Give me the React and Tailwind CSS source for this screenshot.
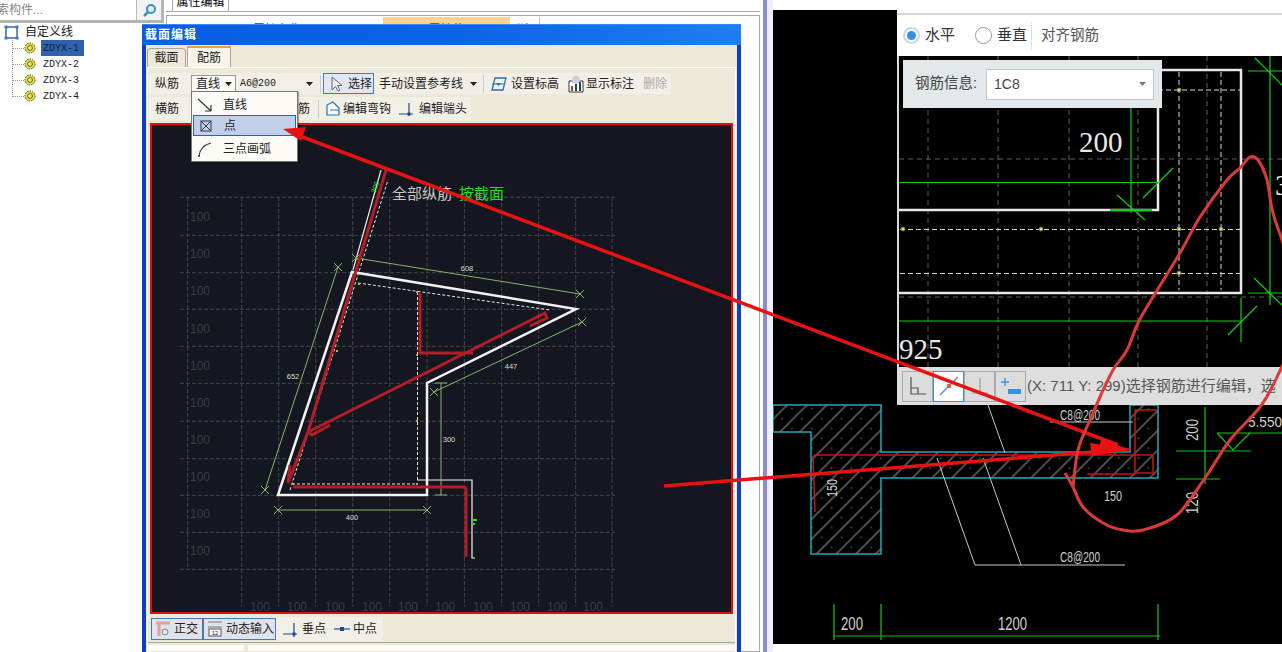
const gridX = [187.7, 241.7, 278.7, 315.7, 352.7, 389.7, 427, 464.4, 501.7, 538.7, 575.7, 612];
const gridY = [197.3, 235.3, 272.7, 309.3, 346.3, 383.3, 421.3, 458.7, 495.3, 532.3, 569.3];
const leftLabels = [217, 254, 291, 329, 366, 403, 440, 477, 514, 551];
const bottomLabels = [260, 297, 335, 372, 408, 445, 483, 520, 557, 593];
const treeItems = ["ZDYX-1", "ZDYX-2", "ZDYX-3", "ZDYX-4"];
const loopPoints = [[1065, 473], [1073, 487], [1083, 507], [1103, 523], [1123, 530], [1143, 530], [1177, 515], [1207, 475], [1230, 440], [1260, 407], [1277, 377], [1290, 340], [1290, 270], [1273, 213], [1267, 180], [1258, 160], [1250, 157], [1240, 168], [1227, 180], [1200, 217], [1180, 253], [1153, 297], [1138, 323], [1127, 350], [1113, 370], [1100, 397], [1090, 420], [1078, 450], [1073, 487]];

function smoothPath(pts) {
  let d = `M${pts[0][0]} ${pts[0][1]}`;
  for (let i = 0; i < pts.length - 1; i++) {
    const p0 = pts[Math.max(i - 1, 0)];
    const p1 = pts[i];
    const p2 = pts[i + 1];
    const p3 = pts[Math.min(i + 2, pts.length - 1)];
    const c1x = p1[0] + (p2[0] - p0[0]) / 6;
    const c1y = p1[1] + (p2[1] - p0[1]) / 6;
    const c2x = p2[0] - (p3[0] - p1[0]) / 6;
    const c2y = p2[1] - (p3[1] - p1[1]) / 6;
    d += `C${c1x} ${c1y} ${c2x} ${c2y} ${p2[0]} ${p2[1]}`;
  }
  return d;
}

function Gear() {
  return (
    <svg width="12" height="12" viewBox="0 0 12 12" className="shrink-0">
      <circle cx="6" cy="6" r="5" fill="#e8dc20" stroke="#555" strokeWidth="1" strokeDasharray="1.5 1" />
      <circle cx="6" cy="6" r="2.4" fill="#f4ee60" stroke="#444" strokeWidth="0.8" />
    </svg>
  );
}

function Arrow() {
  return (
    <svg width="7" height="4" viewBox="0 0 7 4" className="shrink-0">
      <path d="M0 0H7L3.5 4Z" fill="#222" />
    </svg>
  );
}

function Sep() {
  return <span className="block w-px h-[18px] bg-[#cfccbd] shrink-0" />;
}

function Tick({ x, y, s = 6 }) {
  return <path d={`M${x - s} ${y + s}L${x + s} ${y - s}M${x - s} ${y - s}L${x + s} ${y + s}`} />;
}

function SectionCanvas() {
  return (
    <svg viewBox="152 125 579 487" className="block w-full h-full" style={{ background: "#14171f" }}>
      <g stroke="#43464a" strokeWidth="1" strokeDasharray="4 2">
        {gridY.map((y) => <line key={y} x1="180" x2="615" y1={y} y2={y} />)}
        {gridX.map((x, i) => <line key={x} x1={x} x2={x} y1="197" y2={i === 0 ? 570 : 606} />)}
      </g>
      <g fill="#3a3d42" fontSize="12" fontFamily="Liberation Sans, sans-serif">
        {leftLabels.map((y) => <text key={y} x="190" y={y + 4}>100</text>)}
        {bottomLabels.map((x) => <text key={x} x={x} y="611" textAnchor="middle">100</text>)}
      </g>
      <text x="392" y="199" fontSize="15" fill="#c8c8c8" fontFamily="Noto Sans CJK SC, sans-serif">全部纵筋</text>
      <text x="459" y="199" fontSize="15" fill="#22e020" fontFamily="Noto Sans CJK SC, sans-serif">按截面</text>

      <g stroke="#e8e8e8" strokeWidth="1" strokeDasharray="3 2" fill="none">
        <path d="M358 283L550 310M417.5 292V480M292 484H417M290 490L388 180" />
      </g>
      <g stroke="#f2f2f2" fill="none">
        <path d="M278 495L352 272L576 309L427 383V495Z" strokeWidth="2.5" />
        <path d="M353 270L381 170M417 480H472V558H475" strokeWidth="1.2" />
      </g>
      <g stroke="#86b46c" strokeWidth="1" fill="none">
        <path d="M278 510H427M265 490L338 267M356 258L580 294M434 392L582 322M441 383V495" />
        <Tick x={278} y={510} s={4} />
        <Tick x={427} y={510} s={4} />
        <Tick x={265} y={490} s={4} />
        <Tick x={338} y={267} s={4} />
        <Tick x={356} y={258} s={4} />
        <Tick x={580} y={294} s={4} />
        <Tick x={434} y={392} s={4} />
        <Tick x={582} y={322} s={4} />
        <path d="M435 383H447M435 495H447" />
      </g>
      <g fill="#dddddd" fontSize="7.5" textAnchor="middle" fontFamily="Liberation Sans, sans-serif">
        <text x="352" y="520">400</text>
        <text x="293" y="379">652</text>
        <text x="467" y="271">608</text>
        <text x="511" y="369">447</text>
        <text x="449" y="442">300</text>
      </g>
      <g stroke="#b31c28" strokeWidth="3" fill="none">
        <path d="M386 170L308 432L288 483L290 465" />
        <path d="M293 487H463Q466 487 466 490V557" />
        <path d="M420 293V353H473" />
        <path d="M308 432L545 313L547 318L530 326" />
        <path d="M308 432L312 435L330 425" />
      </g>
      <g fill="#22e020" fontSize="7" fontFamily="Liberation Sans, sans-serif">
        <text x="371" y="191" transform="rotate(-70 375 189)">300</text>
        <rect x="472" y="519" width="5" height="2" />
        <rect x="472" y="523" width="3" height="2" />
      </g>
      <g fill="#d8a040">
        {[[359, 284], [417, 292], [417, 355], [337, 351], [417, 421], [293, 484], [417, 484]].map(([x, y]) => (
          <rect key={`${x}-${y}`} x={x - 1} y={y - 1} width="2" height="2" />
        ))}
      </g>
    </svg>
  );
}

function CadDrawing() {
  return (
    <svg viewBox="773 10 509 634" className="block w-full h-full" style={{ background: "#000" }}>
      <defs>
        <pattern id="hatch" width="14" height="14" patternUnits="userSpaceOnUse" patternTransform="rotate(-45)">
          <rect width="14" height="14" fill="#000" />
          <line x1="0" x2="14" y1="3" y2="3" stroke="#9a9a9a" strokeWidth="1" />
          <circle cx="5" cy="9" r="0.7" fill="#8a8a8a" />
        </pattern>
      </defs>
      <path d="M898 10V367" stroke="#d8d8d8" strokeWidth="2" />
      <g stroke="#5e5e5e" strokeWidth="1" strokeDasharray="5 4">
        {[928, 998, 1069, 1138, 1207].map((x) => <line key={x} x1={x} x2={x} y1="56" y2="367" />)}
        {[159, 297].map((y) => <line key={y} x1="899" x2="1282" y1={y} y2={y} />)}
      </g>
      <g stroke="#d8d8d8" strokeWidth="1" strokeDasharray="5 3">
        <path d="M1158 90H1240M900 229.5H1240M900 273.5H1240M1179 72V290M1221 72V290" />
      </g>
      <g stroke="#e8e8e8" strokeWidth="2.5" fill="none">
        <path d="M1158 70H1241V293H899M1158 108V210H899" />
      </g>
      <g stroke="#10d010" strokeWidth="1.2" fill="none">
        <path d="M899 182.5H1160M1131 108V213M1143 198L1173 168M1117 195L1145 220" />
        <path d="M1270 56V305M1248 71H1282M1255 58L1282 85M1248 293H1282M1254 278L1282 305" />
        <path d="M899 321H1241M1241 298V342M1228 335L1257 306" />
        <path d="M1110 210H1152" strokeWidth="2" />
      </g>
      <g fill="#d8d8a0" stroke="#7a7a20" strokeWidth="1">
        {[[903, 229], [1041, 229], [1179, 229], [1221, 229], [1179, 273], [1179, 90]].map(([x, y]) => (
          <circle key={`${x}-${y}`} cx={x} cy={y} r="2" />
        ))}
      </g>
      <g fill="#e8e8e8" fontFamily="Liberation Serif, serif" fontSize="29">
        <text x="1079" y="152">200</text>
        <text x="899" y="359">925</text>
        <text x="1275" y="195">3</text>
      </g>

      <path d="M773 405H881V452H1130V405H1158V478H881V554H811V432H773Z" fill="url(#hatch)" stroke="#20a8b4" strokeWidth="1.5" />
      <g stroke="#c81414" strokeWidth="1.5" fill="none">
        <path d="M815 512L813 458Q813 455 816 455H1150Q1153 455 1153 458V473H1135V410H1158M1087 474H1135" />
      </g>
      <g stroke="#c8c8c8" strokeWidth="1" fill="none">
        <path d="M937 458L975 565H1125M983 458L1021 565M988 405L1005 453M1050 422H1133" />
      </g>
      <g fill="#d0d0d0" fontFamily="Liberation Sans, sans-serif" fontSize="15">
        <text x="1060" y="562" textLength="40" lengthAdjust="spacingAndGlyphs">C8@200</text>
        <text x="1060" y="420" textLength="40" lengthAdjust="spacingAndGlyphs">C8@200</text>
        <text x="1104" y="501" textLength="18" lengthAdjust="spacingAndGlyphs">150</text>
        <text x="1248" y="427" textLength="34" lengthAdjust="spacingAndGlyphs">5.550</text>
        <text x="841" y="630" textLength="22" lengthAdjust="spacingAndGlyphs" fontSize="18">200</text>
        <text x="998" y="630" textLength="29" lengthAdjust="spacingAndGlyphs" fontSize="18">1200</text>
        <text transform="translate(837 497) rotate(-90)" textLength="18" lengthAdjust="spacingAndGlyphs">150</text>
        <text transform="translate(1198 441) rotate(-90)" textLength="22" lengthAdjust="spacingAndGlyphs" fontSize="17">200</text>
        <text transform="translate(1198 514) rotate(-90)" textLength="22" lengthAdjust="spacingAndGlyphs" fontSize="17">120</text>
      </g>
      <g stroke="#10c810" strokeWidth="1.2" fill="none">
        <path d="M1176 451H1251M1176 479H1220M1205 407V484M1217 433L1233 450L1250 433H1217M1250 433H1282" />
        <path d="M834 636H1160M834 604V640M881 604V640M1158 604V640" />
      </g>
    </svg>
  );
}

function MainOverlay() {
  return (
    <svg viewBox="0 0 1282 652" className="absolute inset-0 w-[1282px] h-[652px] pointer-events-none">
      <g stroke="#e81212" strokeWidth="3.5" fill="none">
        <path d="M292 133L1118 445" />
        <path d="M664 486L1105 451" />
      </g>
      <path d="M283 129L306 127L301 141Z" fill="#e81212" />
      <path d="M1132 450L1101 440L1097 455Z" fill="#e81212" />
      <path d="M1132 449L1090 443L1092 456Z" fill="#e81212" />
      <path d={smoothPath(loopPoints)} fill="none" stroke="#dc3a3a" strokeWidth="3" strokeLinejoin="round" />
    </svg>
  );
}

function ToolIcon({ children }) {
  return (
    <svg width="18" height="18" viewBox="0 0 18 18" className="shrink-0">
      {children}
    </svg>
  );
}

function Dialog() {
  return (
    <div className="absolute left-[142px] top-[24px] w-[599px] h-[628px] flex flex-col bg-[#0f3fc0] text-[12px] text-[#222]">
      <div className="h-[21px] shrink-0 flex items-center pl-[3px] font-bold text-white tracking-[1px] bg-gradient-to-r from-[#0b5ee0] via-[#0a62e6] to-[#1f7df0] border-t border-[#3c8af0]">
        截面编辑
      </div>
      <div className="flex-1 mx-[4px] mb-0 bg-[#ece9d8] flex flex-col relative min-h-0">
        <div className="h-[22px] shrink-0 flex items-end pl-[1px] gap-[1px]">
          <div className="w-[39px] h-[19px] flex items-center justify-center border border-b-0 border-[#aca899] bg-[#ece9d8] rounded-t-sm">截面</div>
          <div className="w-[44px] h-[21px] flex items-center justify-center border-x border-[#aca899] border-t-2 border-t-[#e8a838] bg-[#f7f5ea]">配筋</div>
        </div>
        <div className="flex-1 min-h-0 mx-[1px] border-t border-x border-white flex flex-col">
          <div className="h-[21px] mt-[5px] shrink-0 w-[523px] flex items-center bg-[#f2f0e6]">
            <span className="ml-[7px] w-[24px]">纵筋</span>
            <div className="ml-[12px] w-[45px] h-[17px] flex items-center justify-between pl-[4px] pr-[3px] bg-[#fbfaf5] border border-[#999]">
              直线<Arrow />
            </div>
            <div className="ml-[4px] w-[76px] flex items-center justify-between pr-[3px]">
              <span className="font-['Liberation_Mono',monospace] text-[10px]">A6@200</span>
              <Arrow />
            </div>
            <span className="ml-[4px]"><Sep /></span>
            <div className="ml-[2px] w-[51px] h-[21px] flex items-center pl-[3px] gap-[3px] bg-[#e2e6ef] border border-[#4a78b0]">
              <ToolIcon><path d="M5 2V15L8.5 11.5L11 16L13 15L10.5 10.5H15Z" fill="#eee" stroke="#667" strokeWidth="1" /></ToolIcon>
              <span>选择</span>
            </div>
            <span className="ml-[5px] w-[84px] shrink-0">手动设置参考线</span>
            <span className="ml-[7px]"><Arrow /></span>
            <span className="ml-[6px]"><Sep /></span>
            <span className="ml-[6px]">
              <ToolIcon><path d="M5 3H16L13 15H2Z" fill="none" stroke="#2a6fa8" strokeWidth="1.3" /><path d="M2 9H15" stroke="#2a6fa8" /><path d="M6 8H11L8.5 11Z" fill="#2a6fa8" /></ToolIcon>
            </span>
            <span className="ml-[3px] w-[48px] shrink-0">设置标高</span>
            <span className="ml-[8px]">
              <ToolIcon><path d="M2 6H16V17H2Z" fill="#fff" stroke="#333" /><circle cx="9" cy="5" r="4" fill="#ccd" /><path d="M5 11V16" stroke="#b33" strokeWidth="2" /><path d="M9 9V16M13 7V16" stroke="#245" strokeWidth="2" /></ToolIcon>
            </span>
            <span className="ml-[1px] w-[48px] shrink-0">显示标注</span>
            <span className="ml-[9px] text-[#aaa]">删除</span>
          </div>
          <div className="h-[23px] mt-[3px] shrink-0 w-[323px] flex items-center bg-[#f2f0e6]">
            <span className="ml-[7px] w-[24px]">横筋</span>
            <span className="ml-[119px]">筋</span>
            <span className="ml-[8px]"><Sep /></span>
            <span className="ml-[5px]">
              <ToolIcon><path d="M3 5L9 2L15 8V15H3Z" fill="#fff" stroke="#2a6fa8" strokeWidth="1.2" /><path d="M6 10H15" stroke="#2a6fa8" /></ToolIcon>
            </span>
            <span className="ml-[1px] w-[48px] shrink-0">编辑弯钩</span>
            <span className="ml-[7px]">
              <ToolIcon><path d="M1 14H15M11 3V16" stroke="#1c4a88" strokeWidth="1.2" /><rect x="9.5" y="12.5" width="3" height="3" fill="#1c4a88" /></ToolIcon>
            </span>
            <span className="ml-[3px] w-[48px] shrink-0">编辑端头</span>
          </div>
          <div className="mx-[2px] mt-[3px] border-2 border-[#e01010] w-[583px] h-[491px] shrink-0">
            <SectionCanvas />
          </div>
          <div className="h-[25px] mt-[2px] shrink-0 flex items-center pl-[3px]">
            <div className="w-[52px] h-[22px] flex items-center gap-[2px] pl-[2px] bg-[#dfe3ec] border border-[#4a78b0]">
              <ToolIcon><path d="M2 3H16M5 3V16" stroke="#e0a0a0" strokeWidth="3" /><circle cx="11" cy="12" r="3" fill="none" stroke="#789" /></ToolIcon>
              <span>正交</span>
            </div>
            <div className="w-[73px] h-[22px] flex items-center gap-[2px] pl-[2px] bg-[#dfe3ec] border border-[#4a78b0]">
              <ToolIcon><path d="M2 2H16M2 7H16" stroke="#777" /><rect x="3" y="9" width="12" height="7" fill="#fff" stroke="#555" /><text x="9" y="15" fontSize="6" textAnchor="middle" fill="#222" fontFamily="Liberation Sans, sans-serif">12</text></ToolIcon>
              <span>动态输入</span>
            </div>
            <div className="w-[107px] h-[24px] flex items-center pl-[6px] bg-[#f2f0e6]">
              <ToolIcon><path d="M1 14H15M12 3V17" stroke="#1c4a88" strokeWidth="1.2" /><rect x="10.5" y="12.5" width="3" height="3" fill="#1c4a88" /></ToolIcon>
              <span className="ml-[2px]">垂点</span>
              <span className="ml-[7px]">
                <ToolIcon><path d="M1 9H17" stroke="#1c4a88" strokeWidth="1.2" /><rect x="7" y="7" width="4" height="4" fill="#1c4a88" /></ToolIcon>
              </span>
              <span className="ml-[2px]">中点</span>
            </div>
          </div>
          <div className="h-[9px] mt-[1px] shrink-0 flex gap-[4px] border-t border-[#aca899] pt-[2px]">
            <div className="w-[96px] bg-[#fdfdf8]" />
            <div className="flex-1 bg-[#fdfdf8]" />
          </div>
        </div>

        <div className="absolute left-[45px] top-[46px] w-[107px] h-[71px] flex flex-col bg-[#fbfaf5] border border-[#777] shadow-[1px_1px_1px_rgba(0,0,0,0.3)] pt-[3px] px-[1px]">
          <div className="h-[20px] shrink-0 flex items-center pl-[3px]">
            <ToolIcon><path d="M2 3L15 15M15 15V9M15 15H9" stroke="#334" fill="none" strokeWidth="1.2" /></ToolIcon>
            <span className="ml-[9px]">直线</span>
          </div>
          <div className="h-[21px] shrink-0 flex items-center pl-[3px] bg-[#c0d0ea] border border-[#2f5fa8]">
            <ToolIcon><rect x="4" y="4" width="10" height="10" fill="none" stroke="#334" /><path d="M4 4L14 14M14 4L4 14" stroke="#334" /></ToolIcon>
            <span className="ml-[9px]">点</span>
          </div>
          <div className="h-[23px] mt-[1px] shrink-0 flex items-center pl-[3px]">
            <ToolIcon><path d="M3 16Q4 6 15 3" stroke="#334" fill="none" strokeWidth="1.2" /><circle cx="3" cy="16" r="1" fill="#334" /></ToolIcon>
            <span className="ml-[9px]">三点画弧</span>
          </div>
        </div>
      </div>
    </div>
  );
}

function StatusButton({ active, children }) {
  return (
    <div className={active ? "w-[31px] h-[31px] border border-[#3b8ee0] bg-white flex items-center justify-center" : "w-[31px] h-[31px] border border-[#aaa] bg-[#dcdcdc] flex items-center justify-center"}>
      <svg width="24" height="24" viewBox="0 0 24 24">{children}</svg>
    </div>
  );
}

export default function App() {
  return (
    <div className="relative w-[1282px] h-[652px] overflow-hidden flex bg-white font-['Liberation_Sans','Noto_Sans_CJK_SC',sans-serif] text-[12px]">
      <div className="w-[164px] shrink-0 flex flex-col">
        <div className="h-[23px] shrink-0 flex border-b-[3px] border-[#b5b5b5] border-r-[3px]">
          <div className="w-[137px] h-full overflow-hidden border-r border-[#bbb] flex items-center text-[#888]">
            <span className="-ml-[3px] whitespace-nowrap">索构件...</span>
          </div>
          <div className="flex-1 flex items-center justify-center bg-[#f3f3f3]">
            <svg width="15" height="15" viewBox="0 0 15 15">
              <circle cx="9" cy="6" r="4" fill="#dff0fa" stroke="#3e8fc0" strokeWidth="2" />
              <path d="M6 9L2 13" stroke="#3e8fc0" strokeWidth="2.5" />
            </svg>
          </div>
        </div>
        <div className="flex items-center h-[16px] mt-[1px] pl-[4px]">
          <svg width="15" height="15" viewBox="0 0 15 15" className="shrink-0">
            <rect x="2" y="2" width="11" height="11" fill="none" stroke="#1f4f90" strokeWidth="1.3" />
            <g fill="#3b78c8">
              <rect x="0.5" y="0.5" width="3" height="3" />
              <rect x="11.5" y="0.5" width="3" height="3" />
              <rect x="0.5" y="11.5" width="3" height="3" />
              <rect x="11.5" y="11.5" width="3" height="3" />
            </g>
          </svg>
          <span className="ml-[6px] text-[#222]">自定义线</span>
        </div>
        <div className="flex flex-col ml-[12px] border-l border-dotted border-[#999] h-[57px]">
          {treeItems.map((t, i) => (
            <div key={t} className="h-[16px] shrink-0 flex items-center">
              <span className="w-[11px] border-t border-dotted border-[#999]" />
              <Gear />
              <span className={i === 0 ? "ml-[5px] w-[43px] h-[16px] flex items-center pl-[2px] bg-[#2f62ad] text-[#10203c] font-['Liberation_Mono',monospace] text-[10px]" : "ml-[5px] pl-[2px] text-[#222] font-['Liberation_Mono',monospace] text-[10px]"}>
                {t}
              </span>
            </div>
          ))}
        </div>
      </div>

      <div className="w-[596px] shrink-0 flex flex-col pl-[2px]">
        <div className="h-[12px] shrink-0 flex border-b border-[#aaa]">
          <div className="ml-[6px] w-[57px] border-x border-[#aaa] flex items-end justify-center overflow-hidden">属性编辑</div>
        </div>
        <div className="mt-[3px] flex-1 border border-[#aaa] flex flex-col">
          <div className="h-[8px] mt-[1px] overflow-hidden flex">
            <div className="ml-[4px] w-[212px] text-center text-[#444] pt-[4px]">属性名称</div>
            <div className="w-[127px] bg-[#fbd28f] text-center text-[#444] pt-[4px]">属性值</div>
            <div className="w-[30px] pl-[2px] border-r border-[#bbb] text-[#444] pt-[4px]">附加</div>
          </div>
        </div>
      </div>

      <div className="w-[13px] shrink-0 flex">
        <div className="w-[3px] bg-white" />
        <div className="w-[4px] bg-[#8b8fc9]" />
        <div className="flex-1 bg-[#eeeefa]" />
      </div>

      <div className="w-[509px] shrink-0 flex flex-col pt-[10px] pb-[8px]">
        <div className="relative flex-1 min-h-0">
          <CadDrawing />
          <div className="absolute left-[124px] top-0 right-0 h-[46px] bg-white pt-[3px]">
            <div className="h-full flex items-center border-t-2 border-[#d4d6d8] text-[15px]">
              <span className="ml-[6px] w-[17px] h-[17px] rounded-full border-2 border-[#c8d8ec] flex items-center justify-center">
                <span className="w-[9px] h-[9px] rounded-full bg-[#3b8ee0]" />
              </span>
              <span className="ml-[5px] text-[#333]">水平</span>
              <span className="ml-[20px] w-[17px] h-[17px] rounded-full border border-[#999]" />
              <span className="ml-[5px] text-[#333]">垂直</span>
              <span className="ml-[4px] w-px h-[28px] bg-[#ddd]" />
              <span className="ml-[9px] text-[#555] text-[14.5px]">对齐钢筋</span>
            </div>
          </div>
          <div className="absolute left-[130px] top-[50px] w-[259px] h-[48px] flex items-center bg-[#e3e8ea]">
            <span className="ml-[12px] w-[63px] text-[14.5px] text-[#444] whitespace-nowrap">钢筋信息:</span>
            <div className="ml-[8px] w-[168px] h-[31px] flex items-center justify-between px-[7px] bg-white border border-[#c4c8ca] text-[14px] text-[#444]">
              1C8
              <svg width="7" height="4" viewBox="0 0 7 4"><path d="M0 0H7L3.5 4Z" fill="#777" /></svg>
            </div>
          </div>
          <div className="absolute left-[124px] top-[357px] right-0 h-[38px] flex items-center bg-[#dedede] pl-[5px] text-[15px] text-[#555] whitespace-nowrap overflow-hidden">
            <StatusButton><path d="M5 3V20H20M5 14H12V20" stroke="#555" strokeWidth="1.2" fill="none" /></StatusButton>
            <StatusButton active><path d="M3 21L21 3" stroke="#4a90d0" strokeWidth="1.2" /><rect x="10" y="10" width="4" height="4" fill="#e06040" /></StatusButton>
            <StatusButton><path d="M12 4V19M4 19H20" stroke="#999" strokeWidth="1.2" /></StatusButton>
            <StatusButton><path d="M2 8H10M6 4V12" stroke="#3b8ee0" strokeWidth="1.4" /><rect x="9" y="15" width="13" height="5" fill="#3b8ee0" /></StatusButton>
            <span className="ml-[1px]">(X: 711 Y: 299)选择钢筋进行编辑，选</span>
          </div>
        </div>
      </div>

      <Dialog />
      <MainOverlay />
    </div>
  );
}
